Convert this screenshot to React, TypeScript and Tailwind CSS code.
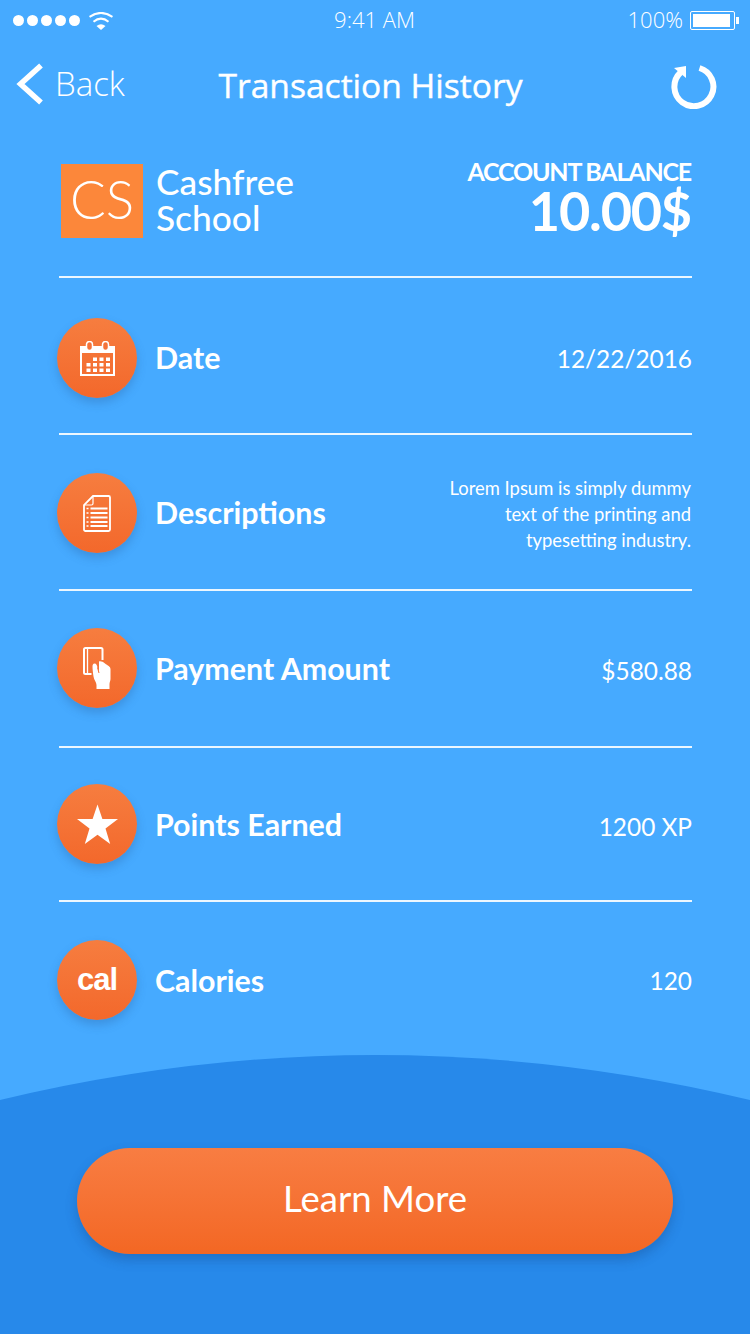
import React from "react";

const lato = "font-['Lato','Open_Sans',sans-serif]";
const O = "#f4733a";

function Calendar() {
  const cells: [number, number][] = [
    [13, 16.5], [19.5, 16.5], [26, 16.5],
    [6.5, 22], [13, 22], [19.5, 22], [26, 22],
    [6.5, 27.5], [13, 27.5], [19.5, 27.5], [26, 27.5],
  ];
  return (
    <svg width="35" height="35" viewBox="0 0 35 35">
      <path d="M0 5h35v30H0z M2 12v21h31V12z" fill="#fff" fillRule="evenodd" />
      <rect x="6.500" y="0.500" width="6" height="9" rx="3" fill={O} stroke="#fff" strokeWidth="1.500" />
      <rect x="22.500" y="0.500" width="6" height="9" rx="3" fill={O} stroke="#fff" strokeWidth="1.500" />
      {cells.map(([x, y]) => (
        <rect key={`${x}-${y}`} x={x} y={y} width="4" height="3.500" fill="#fff" />
      ))}
    </svg>
  );
}

function Doc() {
  return (
    <svg width="28" height="37" viewBox="0 0 28 37" fill="none" stroke="#fff">
      <path d="M10 1H25.500a1.500 1.500 0 0 1 1.500 1.500V34.500a1.500 1.500 0 0 1-1.500 1.500H2.500a1.500 1.500 0 0 1-1.500-1.500V10Z" strokeWidth="1.800" />
      <path d="M10 1V8.500a1.500 1.500 0 0 1-1.500 1.500H1" strokeWidth="1.200" />
      <path d="M7.500 13.500H24.500M7.500 18H24.500M7.500 22.500H24.500M7.500 27H24.500M7.500 31H24.500" strokeWidth="2" />
      <path d="M3.500 13.500H5.500M3.500 18H5.500M3.500 22.500H5.500M3.500 27H5.500M3.500 31H5.500" strokeWidth="1.400" />
    </svg>
  );
}

function CardHand() {
  return (
    <svg width="28" height="42" viewBox="0 0 28 42">
      <path d="M19.500 13V2.500A1.500 1.500 0 0 0 18 1H2.500A1.500 1.500 0 0 0 1 2.500V25.500A1.500 1.500 0 0 0 2.500 27H8.500" fill="none" stroke="#fff" strokeWidth="2" />
      <path d="M4.500 1V27" fill="none" stroke="#fff" strokeWidth="1.300" />
      <path d="M11.500 16.500C13.500 16.500 14 18.500 14.500 20.500L16 25.500V14.500C18 14 20 15 22 16.500C24.500 18.500 27.500 19.500 27.500 22V32C27.500 34 26.500 35 26.500 37V42H13.500V38C13.500 35 11 33 10.500 29.500C10 26 9.500 22.500 9.500 19.500C9.500 18 10 16.500 11.500 16.500Z" fill="#fff" />
      <path d="M14.500 20.500 16 26" fill="none" stroke={O} strokeWidth="1" />
    </svg>
  );
}

function Star() {
  return (
    <svg width="41" height="41" viewBox="0 0 42 41">
      <path d="M21 0 26 14.800H42L29.200 24.500 34 40.500 21 31 8 40.500 12.800 24.500 0 14.800H16Z" fill="#fff" />
    </svg>
  );
}

function Row({ icon, label, value, cls, labelCls = "" }: { icon: React.ReactNode; label: string; value: React.ReactNode; cls: string; labelCls?: string }) {
  return (
    <div className={`ml-[59px] mr-[58px] flex items-center justify-between ${cls}`}>
      <div className="flex items-center">
        <div className="-ml-[2px] w-[80px] h-[80px] rounded-full bg-gradient-to-b from-[#f67d3f] to-[#f3682b] shadow-[0_5px_10px_rgba(40,90,150,0.3)] flex items-center justify-center text-white">
          {icon}
        </div>
        <div className={`${lato} ml-[18px] text-[30.4px] leading-[36px] font-bold text-white ${labelCls}`}>{label}</div>
      </div>
      {value}
    </div>
  );
}

const val = `${lato} text-[24.4px] leading-[30px] text-white`;
const div = "border-b-2 border-white/90";

export default function App() {
  return (
    <div className="relative w-[750px] h-[1334px] overflow-hidden bg-[#46aaff] flex flex-col">
      <svg className="absolute left-0 top-[1055px]" width="750" height="279" viewBox="0 0 750 279">
        <path d="M0 45Q375 -45 750 45V279H0Z" fill="#2789ea" />
      </svg>

      <div className="relative h-[41px] flex items-center justify-between pl-[13px] pr-[11px] font-['Open_Sans',sans-serif] text-[22px] font-light text-white">
        <div className="w-[240px] flex items-center gap-[3px]">
          {[0, 1, 2, 3, 4].map((i) => (
            <span key={i} className="w-[11px] h-[11px] rounded-full bg-white" />
          ))}
          <svg className="ml-[6px]" width="24" height="18" viewBox="0 0 24 18" fill="none" stroke="#fff" strokeWidth="2">
            <path d="M0.500 4.800Q12 -3 23.500 4.800" />
            <path d="M4.500 9.800Q12 3.500 19.500 9.800" />
            <path d="M12 18 7.500 14Q12 10.500 16.500 14Z" fill="#fff" stroke="none" />
          </svg>
        </div>
        <div className="-ml-[3px] -mt-[2px]">9:41 AM</div>
        <div className="w-[240px] flex items-center justify-end">
          <span className="-mt-[2px]">100%</span>
          <div className="ml-[7px] w-[45px] h-[19px] border border-white rounded-[2px] pl-[2px] pr-[4px] py-[2px]">
            <div className="w-full h-full bg-white" />
          </div>
          <div className="ml-[1px] w-[3px] h-[7px] bg-white" />
        </div>
      </div>

      <div className="relative h-[89px] flex items-center justify-between pl-[16px] pr-[33px]">
        <div className="w-[200px] flex items-center -mt-[3px]">
          <svg width="28" height="44" viewBox="0 0 28 44" fill="none" stroke="#fff" strokeWidth="5.500">
            <path d="M25 3.500 4.500 22 25 40.500" />
          </svg>
          <span className="ml-[11px] font-['Open_Sans',sans-serif] font-light text-[33px] text-white">Back</span>
        </div>
        <div className="-ml-[36px] font-['Open_Sans',sans-serif] text-[33.600px] font-normal text-white [-webkit-text-stroke:0.4px_white]">Transaction History</div>
        <svg width="46" height="44" viewBox="0 0 46 44" fill="none" className="ml-[110px] mt-[3px]">
          <path d="M28.500 3A19.500 19.500 0 1 1 9.500 7.500" stroke="#fff" strokeWidth="6" />
          <path d="M3 3 15 1V13Z" fill="#fff" />
        </svg>
      </div>

      <div className="relative h-[148px] ml-[59px] mr-[58px] border-b-2 border-white/90 flex items-start justify-between pt-[34px]">
        <div className="flex items-center ml-[2px]">
          <div className={`${lato} w-[82px] h-[74px] pb-[5px] bg-[#fc873a] flex items-center justify-center text-[53px] font-light text-white`}>CS</div>
          <div className={`${lato} ml-[13px] -mt-[3px] text-[35.300px] leading-[36px] font-medium text-white`}>
            <div>Cashfree</div>
            <div>School</div>
          </div>
        </div>
        <div className={`${lato} mr-[1px] text-right text-white font-bold -mt-[6px]`}>
          <div className="text-[25px] leading-[26px] tracking-[-1.2px]">ACCOUNT BALANCE</div>
          <div className="text-[54px] leading-[54px] tracking-[-1.2px]">10.00$</div>
        </div>
      </div>

      <div className="relative">
        <Row cls={`h-[157px] pt-[5px] ${div}`} labelCls="-mt-[2px]" icon={<Calendar />} label="Date" value={<div className={`${val} mt-[2px]`}>12/22/2016</div>} />
        <Row
          cls={`h-[156px] pt-[2px] ${div}`}
          labelCls="-mt-[2px]"
          icon={<Doc />}
          label="Descriptions"
          value={
            <div className={`${lato} mt-[1px] mr-[1px] text-right text-[18.400px] leading-[26px] text-white`}>
              Lorem Ipsum is simply dummy
              <br />
              text of the printing and
              <br />
              typesetting industry.
            </div>
          }
        />
        <Row cls={`h-[157px] pb-[1px] ${div}`} icon={<CardHand />} label="Payment Amount" value={<div className={`${val} mt-[5px]`}>$580.88</div>} />
        <Row cls={`h-[154px] ${div}`} icon={<Star />} label="Points Earned" value={<div className={`${val} mt-[6px]`}>1200 XP</div>} />
        <Row
          cls="h-[154px] pt-[2px]"
          icon={<span className="font-['Liberation_Sans',sans-serif] font-bold text-[31px] tracking-[-1px]">cal</span>}
          label="Calories"
          value={<div className={`${val} mt-[2px]`}>120</div>}
        />
      </div>

      <div className="relative flex justify-center mt-[92px]">
        <div className={`${lato} w-[596px] h-[106px] pb-[6px] rounded-full bg-gradient-to-b from-[#f87d42] to-[#f36723] shadow-[0_6px_12px_rgba(20,60,120,0.3)] flex items-center justify-center text-[36.600px] text-white font-normal`}>
          Learn More
        </div>
      </div>
    </div>
  );
}
